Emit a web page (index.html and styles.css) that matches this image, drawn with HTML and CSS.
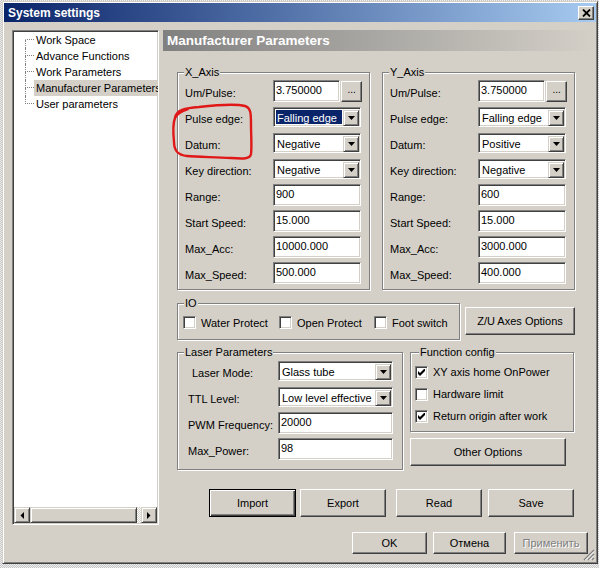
FILE: index.html
```html
<!DOCTYPE html>
<html>

<head>
    <title>System settings</title>
    <meta http-equiv="Content-Type" content="text/html; charset=UTF-8">
    <link rel="stylesheet" href="styles.css">
</head>

<body>
    <div class='window'>
        <div class='titlebar'>
            <span>System settings</span>
            <div class='close-btn'>
                <svg width="9" height="8" viewBox="0 0 9 8"><path d="M1 0.5 L8 7.5 M8 0.5 L1 7.5" stroke="#000" stroke-width="1.8" fill="none"/></svg>
            </div>
        </div>
        <div class='client'>
            <div class='main'>
                <div class='tree'>
                    <ul class='tree-list'>
                        <li class='first'><span class='branch'><i class='up'></i><i class='down'></i></span><span class='node'>Work Space</span></li>
                        <li><span class='branch'><i class='up'></i><i class='down'></i></span><span class='node'>Advance Functions</span></li>
                        <li><span class='branch'><i class='up'></i><i class='down'></i></span><span class='node'>Work Parameters</span></li>
                        <li><span class='branch'><i class='up'></i><i class='down'></i></span><span class='node selected'>Manufacturer Parameters</span></li>
                        <li class='last'><span class='branch'><i class='up'></i><i class='down'></i></span><span class='node'>User parameters</span></li>
                    </ul>
                    <div class='hscroll'>
                        <div class='raised sb-btn'><svg width="4" height="7" viewBox="0 0 4 7"><path d="M4 0 V7 L0.5 3.5 Z" fill="#000"/></svg></div>
                        <div class='raised sb-thumb'></div>
                        <div class='sb-track'></div>
                        <div class='raised sb-btn'><svg width="4" height="7" viewBox="0 0 4 7"><path d="M0 0 V7 L3.5 3.5 Z" fill="#000"/></svg></div>
                    </div>
                </div>

                <div class='panel'>
                    <div class='panel-head'>Manufacturer Parameters</div>

                    <div class='axes'>
                        <div class='group axis'>
                            <div class='legend'>X_Axis</div>
                            <div class='row'><span class='lbl'>Um/Pulse:</span><div class='edit short'>3.750000</div><div class='raised mini'>...</div></div>
                            <div class='row'><span class='lbl'>Pulse edge:</span><div class='combo'><span class='val hilite'>Falling edge</span><span class='raised drop'><svg width="7" height="4" viewBox="0 0 7 4"><path d="M0 0 H7 L3.5 4 Z" fill="#000"/></svg></span></div></div>
                            <div class='row'><span class='lbl'>Datum:</span><div class='combo'><span class='val'>Negative</span><span class='raised drop'><svg width="7" height="4" viewBox="0 0 7 4"><path d="M0 0 H7 L3.5 4 Z" fill="#000"/></svg></span></div></div>
                            <div class='row'><span class='lbl'>Key direction:</span><div class='combo'><span class='val'>Negative</span><span class='raised drop'><svg width="7" height="4" viewBox="0 0 7 4"><path d="M0 0 H7 L3.5 4 Z" fill="#000"/></svg></span></div></div>
                            <div class='row'><span class='lbl'>Range:</span><div class='edit'>900</div></div>
                            <div class='row'><span class='lbl'>Start Speed:</span><div class='edit'>15.000</div></div>
                            <div class='row'><span class='lbl'>Max_Acc:</span><div class='edit'>10000.000</div></div>
                            <div class='row'><span class='lbl'>Max_Speed:</span><div class='edit'>500.000</div></div>
                        </div>
                        <div class='group axis'>
                            <div class='legend'>Y_Axis</div>
                            <div class='row'><span class='lbl'>Um/Pulse:</span><div class='edit short'>3.750000</div><div class='raised mini'>...</div></div>
                            <div class='row'><span class='lbl'>Pulse edge:</span><div class='combo'><span class='val'>Falling edge</span><span class='raised drop'><svg width="7" height="4" viewBox="0 0 7 4"><path d="M0 0 H7 L3.5 4 Z" fill="#000"/></svg></span></div></div>
                            <div class='row'><span class='lbl'>Datum:</span><div class='combo'><span class='val'>Positive</span><span class='raised drop'><svg width="7" height="4" viewBox="0 0 7 4"><path d="M0 0 H7 L3.5 4 Z" fill="#000"/></svg></span></div></div>
                            <div class='row'><span class='lbl'>Key direction:</span><div class='combo'><span class='val'>Negative</span><span class='raised drop'><svg width="7" height="4" viewBox="0 0 7 4"><path d="M0 0 H7 L3.5 4 Z" fill="#000"/></svg></span></div></div>
                            <div class='row'><span class='lbl'>Range:</span><div class='edit'>600</div></div>
                            <div class='row'><span class='lbl'>Start Speed:</span><div class='edit'>15.000</div></div>
                            <div class='row'><span class='lbl'>Max_Acc:</span><div class='edit'>3000.000</div></div>
                            <div class='row'><span class='lbl'>Max_Speed:</span><div class='edit'>400.000</div></div>
                        </div>
                    </div>

                    <div class='io-row'>
                        <div class='group io'>
                            <div class='legend'>IO</div>
                            <div class='checks'>
                                <span class='check'><span class='box'></span>Water Protect</span>
                                <span class='check'><span class='box'></span>Open Protect</span>
                                <span class='check'><span class='box'></span>Foot switch</span>
                            </div>
                        </div>
                        <div class='raised btn zu-btn'>Z/U Axes Options</div>
                    </div>

                    <div class='lower'>
                        <div class='group laser'>
                            <div class='legend'>Laser Parameters</div>
                            <div class='row'><span class='lbl indent'>Laser Mode:</span><div class='combo wide'><span class='val'>Glass tube</span><span class='raised drop'><svg width="7" height="4" viewBox="0 0 7 4"><path d="M0 0 H7 L3.5 4 Z" fill="#000"/></svg></span></div></div>
                            <div class='row'><span class='lbl'>TTL Level:</span><div class='combo wide'><span class='val'>Low level effective</span><span class='raised drop'><svg width="7" height="4" viewBox="0 0 7 4"><path d="M0 0 H7 L3.5 4 Z" fill="#000"/></svg></span></div></div>
                            <div class='row'><span class='lbl'>PWM Frequency:</span><div class='edit wide'>20000</div></div>
                            <div class='row'><span class='lbl'>Max_Power:</span><div class='edit wide'>98</div></div>
                        </div>
                        <div class='side'>
                            <div class='group func'>
                                <div class='legend'>Function config</div>
                                <div class='check-row'><span class='box'><svg width="7" height="7" viewBox="0 0 7 7"><path d="M0 2 L2 4 L7 -1 L7 2 L2 7 L0 5 Z" fill="#000"/></svg></span>XY axis home OnPower</div>
                                <div class='check-row'><span class='box'></span>Hardware limit</div>
                                <div class='check-row'><span class='box'><svg width="7" height="7" viewBox="0 0 7 7"><path d="M0 2 L2 4 L7 -1 L7 2 L2 7 L0 5 Z" fill="#000"/></svg></span>Return origin after work</div>
                            </div>
                            <div class='raised btn other-btn'>Other Options</div>
                        </div>
                    </div>

                    <div class='actions'>
                        <div class='raised btn act-btn default'>Import</div>
                        <div class='raised btn act-btn'>Export</div>
                        <div class='raised btn act-btn'>Read</div>
                        <div class='raised btn act-btn'>Save</div>
                    </div>
                </div>
            </div>

            <div class='footer'>
                <div class='raised btn dlg-btn ok'>OK</div>
                <div class='raised btn dlg-btn cancel'>Отмена</div>
                <div class='raised btn dlg-btn disabled'>Применить</div>
            </div>
        </div>

        <!-- size grip in the corner -->
        <svg class='grip' width="12" height="12" viewBox="0 0 12 12">
            <path d="M11 1 L1 11 M11 5 L5 11 M11 9 L9 11" stroke="#808080" stroke-width="1.4"/>
            <path d="M11 2.5 L2.5 11 M11 6.5 L6.5 11 M11 10.5 L10.5 11" stroke="#fff" stroke-width="1"/>
        </svg>

        <!-- red hand drawn mark over the pulse edge / datum labels -->
        <svg class='mark' width="90" height="62" viewBox="168 100 90 62">
            <path d="M174 117 C175 109 184 107 198 106 C216 104 236 103 244 105 C250 107 250 113 250 123 C250 135 251 146 250 153 C249 158 243 158 230 157 C212 156 196 156 186 155 C177 154 173 150 173 141 C172 131 172 122 174 117 C176 112 181 110 187 108" fill="none" stroke="#e01818" stroke-width="2.4" stroke-linecap="round" stroke-linejoin="round"/>
        </svg>
    </div>
</body>

</html>
```

FILE: styles.css
```css
html,
body
{
    margin: 0;
}

body
{
    width: 599px;
    height: 568px;
    overflow: hidden;
    color: #000;
    font-family: "Liberation Sans", Arial, sans-serif;
    font-size: 11px;
    background: repeating-conic-gradient(#c6c6c6 0 25%, #efefef 0 50%) 0 0 / 2px 2px;
}

.window
{
    position: relative;
    box-sizing: border-box;
    width: 596px;
    height: 563px;
    margin: 1px 0 0 2px;
    padding: 1px;
    background: #d4d0c8;
    border: 1px solid;
    border-color: #d4d0c8 #404040 #404040 #d4d0c8;
    box-shadow: inset 1px 1px 0 #fff, inset -1px -1px 0 #808080;
}

/* title bar */
.titlebar
{
    height: 19px;
    display: flex;
    align-items: center;
    justify-content: space-between;
    padding: 0 2px 0 4px;
    color: #fff;
    font-size: 12px;
    font-weight: bold;
    background: linear-gradient(to right, #0a246a, #a6caf0);
}

.close-btn
{
    box-sizing: border-box;
    width: 16px;
    height: 14px;
    display: flex;
    align-items: center;
    justify-content: center;
    background: #d4d0c8;
    border: 1px solid;
    border-color: #fff #404040 #404040 #fff;
    box-shadow: inset -1px -1px 0 #808080;
}

/* 3d bits */
.raised
{
    box-sizing: border-box;
    background: #d4d0c8;
    border: 1px solid;
    border-color: #fff #404040 #404040 #fff;
    box-shadow: inset -1px -1px 0 #808080;
}

.client
{
    padding: 8px 0 0 8px;
}

.main
{
    display: flex;
    gap: 4px;
}

/* tree */
.tree
{
    box-sizing: border-box;
    width: 147px;
    height: 495px;
    display: flex;
    flex-direction: column;
    overflow: hidden;
    background: #fff;
    border: 1px solid;
    border-color: #808080 #fff #fff #808080;
    box-shadow: inset 1px 1px 0 #404040, inset -1px -1px 0 #d4d0c8;
    padding: 1px;
}

.tree-list
{
    flex: 1;
    margin: 0;
    padding: 0 0 0 11px;
    list-style: none;
}

.tree-list li
{
    display: flex;
    height: 16px;
    white-space: nowrap;
}

.branch
{
    flex: none;
    width: 9px;
    height: 16px;
    display: flex;
    flex-direction: column;
}

.branch i
{
    display: block;
    border-left: 1px dotted #808080;
}

.branch .up
{
    height: 7px;
    border-bottom: 1px dotted #808080;
}

.branch .down
{
    flex: 1;
}

.first .up,
.last .down
{
    border-left-color: transparent;
}

.node
{
    padding: 0 2px;
    line-height: 16px;
}

.node.selected
{
    background: #d4d0c8;
}

.hscroll
{
    display: flex;
    height: 16px;
}

.sb-btn
{
    width: 16px;
    height: 16px;
    display: flex;
    align-items: center;
    justify-content: center;
    border-color: #d4d0c8 #404040 #404040 #d4d0c8;
    box-shadow: inset 1px 1px 0 #fff, inset -1px -1px 0 #808080;
}

.sb-thumb
{
    width: 107px;
    border-color: #d4d0c8 #404040 #404040 #d4d0c8;
    box-shadow: inset 1px 1px 0 #fff, inset -1px -1px 0 #808080;
}

.sb-track
{
    flex: 1;
    background: repeating-conic-gradient(#fff 0 25%, #d4d0c8 0 50%) 0 0 / 2px 2px;
}

/* right panel */
.panel
{
    flex: 1;
}

.panel-head
{
    height: 21px;
    line-height: 21px;
    padding-left: 4px;
    color: #fff;
    font-size: 13.5px;
    font-weight: bold;
    background: linear-gradient(to right, #808080, #d4d0c8);
}

.group
{
    box-sizing: border-box;
    border: 1px solid #808080;
    box-shadow: inset 1px 1px 0 #fff, 1px 1px 0 #fff;
}

.legend
{
    width: fit-content;
    height: 13px;
    line-height: 13px;
    margin: -7px 0 0 -1px;
    padding: 0 1px;
    background: #d4d0c8;
}

.axes
{
    display: flex;
    gap: 12px;
    margin-top: 21px;
    padding-left: 14px;
}

.group.axis
{
    width: 193px;
    height: 218px;
    padding: 0 7px;
}

.row
{
    display: flex;
    align-items: center;
    height: 22px;
    margin-top: 4px;
}

.legend + .row
{
    margin-top: 1px;
}

.lbl
{
    flex: none;
    width: 88px;
    padding-top: 4px;
    white-space: nowrap;
}

.edit,
.combo
{
    box-sizing: border-box;
    width: 88px;
    background: #fff;
    border: 1px solid;
    border-color: #808080 #fff #fff #808080;
    box-shadow: inset 1px 1px 0 #404040, inset -1px -1px 0 #d4d0c8;
    white-space: nowrap;
    overflow: hidden;
}

.edit
{
    height: 22px;
    padding: 1px 2px;
    line-height: 17px;
}

.edit.short
{
    width: 71px;
}

.mini
{
    width: 22px;
    height: 21px;
    margin-left: 1px;
    text-align: center;
    line-height: 15px;
    font-size: 10px;
}

.combo
{
    display: flex;
    height: 20px;
    padding: 1px;
}

.combo .val
{
    flex: 1;
    margin: 1px;
    padding-left: 1px;
    line-height: 16px;
}

.combo .val.hilite
{
    color: #fff;
    background: #0a246a;
}

.drop
{
    flex: none;
    width: 16px;
    height: 16px;
    margin-top: 1px;
    display: flex;
    align-items: center;
    justify-content: center;
    border-color: #d4d0c8 #404040 #404040 #d4d0c8;
    box-shadow: inset 1px 1px 0 #fff, inset -1px -1px 0 #808080;
}

.combo.wide,
.edit.wide
{
    width: 119px;
}

/* checkboxes */
.box
{
    box-sizing: border-box;
    flex: none;
    width: 13px;
    height: 13px;
    display: flex;
    align-items: center;
    justify-content: center;
    background: #fff;
    border: 1px solid;
    border-color: #808080 #fff #fff #808080;
    box-shadow: inset 1px 1px 0 #404040, inset -1px -1px 0 #d4d0c8;
}

.io-row
{
    display: flex;
    align-items: flex-start;
    gap: 5px;
    margin-top: 13px;
    padding-left: 14px;
}

.group.io
{
    width: 283px;
    height: 37px;
    padding: 0 5px;
}

.group.io .legend
{
    margin-left: 1px;
}

.checks
{
    display: flex;
    height: 13px;
    margin-top: 6px;
}

.check
{
    flex: none;
    display: flex;
    align-items: center;
    gap: 5px;
    width: 96px;
    white-space: nowrap;
}

.check:nth-child(2)
{
    width: 95px;
}

.check:last-child
{
    width: auto;
}

.btn
{
    display: flex;
    align-items: center;
    justify-content: center;
    white-space: nowrap;
}

.zu-btn
{
    width: 110px;
    height: 28px;
    margin-top: 4px;
}

.lower
{
    display: flex;
    align-items: flex-start;
    gap: 7px;
    margin-top: 12px;
    padding-left: 14px;
}

.group.laser
{
    width: 226px;
    height: 118px;
    padding: 0 9px 0 10px;
}

.group.laser .legend
{
    margin-left: -4px;
}

.group.laser .lbl
{
    width: 90px;
}

.group.laser .lbl.indent
{
    box-sizing: border-box;
    padding-left: 4px;
}

.side
{
    width: 164px;
}

.group.func
{
    height: 80px;
    padding: 0 4px;
}

.group.func .legend
{
    margin-left: 4px;
}

.check-row
{
    display: flex;
    align-items: center;
    gap: 5px;
    height: 22px;
    white-space: nowrap;
}

.legend + .check-row
{
    margin-top: 2px;
}

.other-btn
{
    width: 156px;
    height: 28px;
    margin-top: 6px;
}

.actions
{
    display: flex;
    margin: 19px 0 0 46px;
}

.act-btn
{
    width: 86px;
    height: 28px;
}

.act-btn + .act-btn
{
    margin-left: 4px;
}

.act-btn:nth-child(3)
{
    margin-left: 10px;
}

.act-btn:nth-child(4)
{
    margin-left: 6px;
}

.act-btn.default
{
    width: 87px;
    border-color: #000;
    box-shadow: inset 1px 1px 0 #fff, inset -1px -1px 0 #404040, inset -2px -2px 0 #808080;
}

.footer
{
    display: flex;
    justify-content: flex-end;
    margin-top: 7px;
    padding-right: 8px;
}

.dlg-btn
{
    width: 74px;
    height: 22px;
}

.dlg-btn.ok
{
    width: 75px;
    margin-right: 6px;
}

.dlg-btn.cancel
{
    width: 73px;
    margin-right: 8px;
}

.dlg-btn.disabled
{
    color: #808080;
    text-shadow: 1px 1px 0 #fff;
}

.grip
{
    position: absolute;
    right: 2px;
    bottom: 2px;
}

.mark
{
    position: absolute;
    left: 166px;
    top: 99px;
}
```
